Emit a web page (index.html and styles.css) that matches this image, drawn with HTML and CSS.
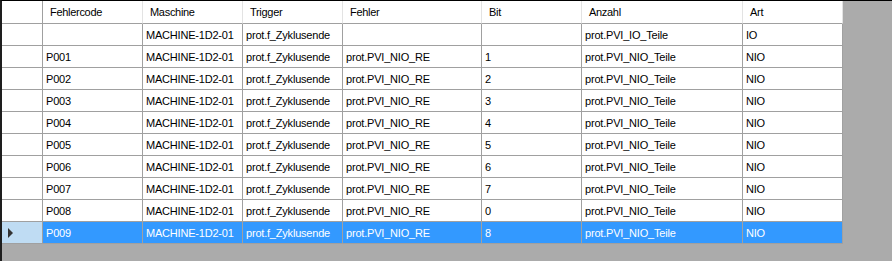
FILE: index.html
```html
<!DOCTYPE html>
<html>
<head>
<meta charset="utf-8">
<link rel="stylesheet" href="styles.css">
</head>
<body>
<div class="control">
  <div class="grid">
    <div class="hd corner"></div>
    <div class="hd">Fehlercode</div>
    <div class="hd">Maschine</div>
    <div class="hd">Trigger</div>
    <div class="hd">Fehler</div>
    <div class="hd">Bit</div>
    <div class="hd">Anzahl</div>
    <div class="hd">Art</div>

    <div class="rh"></div><div class="c"></div><div class="c">MACHINE-1D2-01</div><div class="c">prot.f_Zyklusende</div><div class="c"></div><div class="c"></div><div class="c">prot.PVI_IO_Teile</div><div class="c">IO</div>
    <div class="rh"></div><div class="c">P001</div><div class="c">MACHINE-1D2-01</div><div class="c">prot.f_Zyklusende</div><div class="c">prot.PVI_NIO_RE</div><div class="c">1</div><div class="c">prot.PVI_NIO_Teile</div><div class="c">NIO</div>
    <div class="rh"></div><div class="c">P002</div><div class="c">MACHINE-1D2-01</div><div class="c">prot.f_Zyklusende</div><div class="c">prot.PVI_NIO_RE</div><div class="c">2</div><div class="c">prot.PVI_NIO_Teile</div><div class="c">NIO</div>
    <div class="rh"></div><div class="c">P003</div><div class="c">MACHINE-1D2-01</div><div class="c">prot.f_Zyklusende</div><div class="c">prot.PVI_NIO_RE</div><div class="c">3</div><div class="c">prot.PVI_NIO_Teile</div><div class="c">NIO</div>
    <div class="rh"></div><div class="c">P004</div><div class="c">MACHINE-1D2-01</div><div class="c">prot.f_Zyklusende</div><div class="c">prot.PVI_NIO_RE</div><div class="c">4</div><div class="c">prot.PVI_NIO_Teile</div><div class="c">NIO</div>
    <div class="rh"></div><div class="c">P005</div><div class="c">MACHINE-1D2-01</div><div class="c">prot.f_Zyklusende</div><div class="c">prot.PVI_NIO_RE</div><div class="c">5</div><div class="c">prot.PVI_NIO_Teile</div><div class="c">NIO</div>
    <div class="rh"></div><div class="c">P006</div><div class="c">MACHINE-1D2-01</div><div class="c">prot.f_Zyklusende</div><div class="c">prot.PVI_NIO_RE</div><div class="c">6</div><div class="c">prot.PVI_NIO_Teile</div><div class="c">NIO</div>
    <div class="rh"></div><div class="c">P007</div><div class="c">MACHINE-1D2-01</div><div class="c">prot.f_Zyklusende</div><div class="c">prot.PVI_NIO_RE</div><div class="c">7</div><div class="c">prot.PVI_NIO_Teile</div><div class="c">NIO</div>
    <div class="rh"></div><div class="c">P008</div><div class="c">MACHINE-1D2-01</div><div class="c">prot.f_Zyklusende</div><div class="c">prot.PVI_NIO_RE</div><div class="c">0</div><div class="c">prot.PVI_NIO_Teile</div><div class="c">NIO</div>
    <div class="rh sel-rh"><svg class="arrow" width="6" height="10" viewBox="0 0 6 10"><polygon points="0,0 5,5 0,10" fill="#333"/></svg></div><div class="c sel">P009</div><div class="c sel">MACHINE-1D2-01</div><div class="c sel">prot.f_Zyklusende</div><div class="c sel">prot.PVI_NIO_RE</div><div class="c sel">8</div><div class="c sel">prot.PVI_NIO_Teile</div><div class="c sel">NIO</div>
  </div>
</div>
</body>
</html>
```

FILE: styles.css
```css
* { box-sizing: border-box; }
html, body { margin: 0; padding: 0; }
body {
  width: 892px;
  height: 261px;
  overflow: hidden;
  background: #ababab;
}
.control {
  width: 892px;
  height: 261px;
  border-top: 1px solid #000;
  border-left: 2px solid #1e1e1e;
  background: #ababab;
}
.grid {
  display: grid;
  grid-template-columns: 41px 100px 100px 100px 139px 100px 161px 100px;
  grid-template-rows: 23px repeat(10, 22px);
  width: max-content;
  font-family: "Liberation Sans", Arial, sans-serif;
  font-size: 11px;
  color: #000;
}
.hd {
  background: #fff;
  border-right: 1px solid #e3e3e3;
  border-bottom: 1px solid #a0a0a0;
  padding: 5px 0 0 7px;
  letter-spacing: -0.3px;
  white-space: nowrap;
  overflow: hidden;
}
.hd.corner { border-right: 1px solid #a0a0a0; }
.rh {
  background: #fff;
  border-right: 1px solid #a0a0a0;
  border-bottom: 1px solid #a0a0a0;
  display: flex;
  align-items: center;
}
.c {
  background: #fff;
  border-right: 1px solid #a0a0a0;
  border-bottom: 1px solid #a0a0a0;
  padding: 0 0 0 3px;
  display: flex;
  align-items: center;
  letter-spacing: -0.2px;
  white-space: nowrap;
  overflow: hidden;
}
.c.sel {
  background: #3399ff;
  color: #fff;
}
.sel-rh {
  background: #bfdcf3;
}
.arrow {
  margin-left: 6px;
  margin-top: 1px;
}
```
